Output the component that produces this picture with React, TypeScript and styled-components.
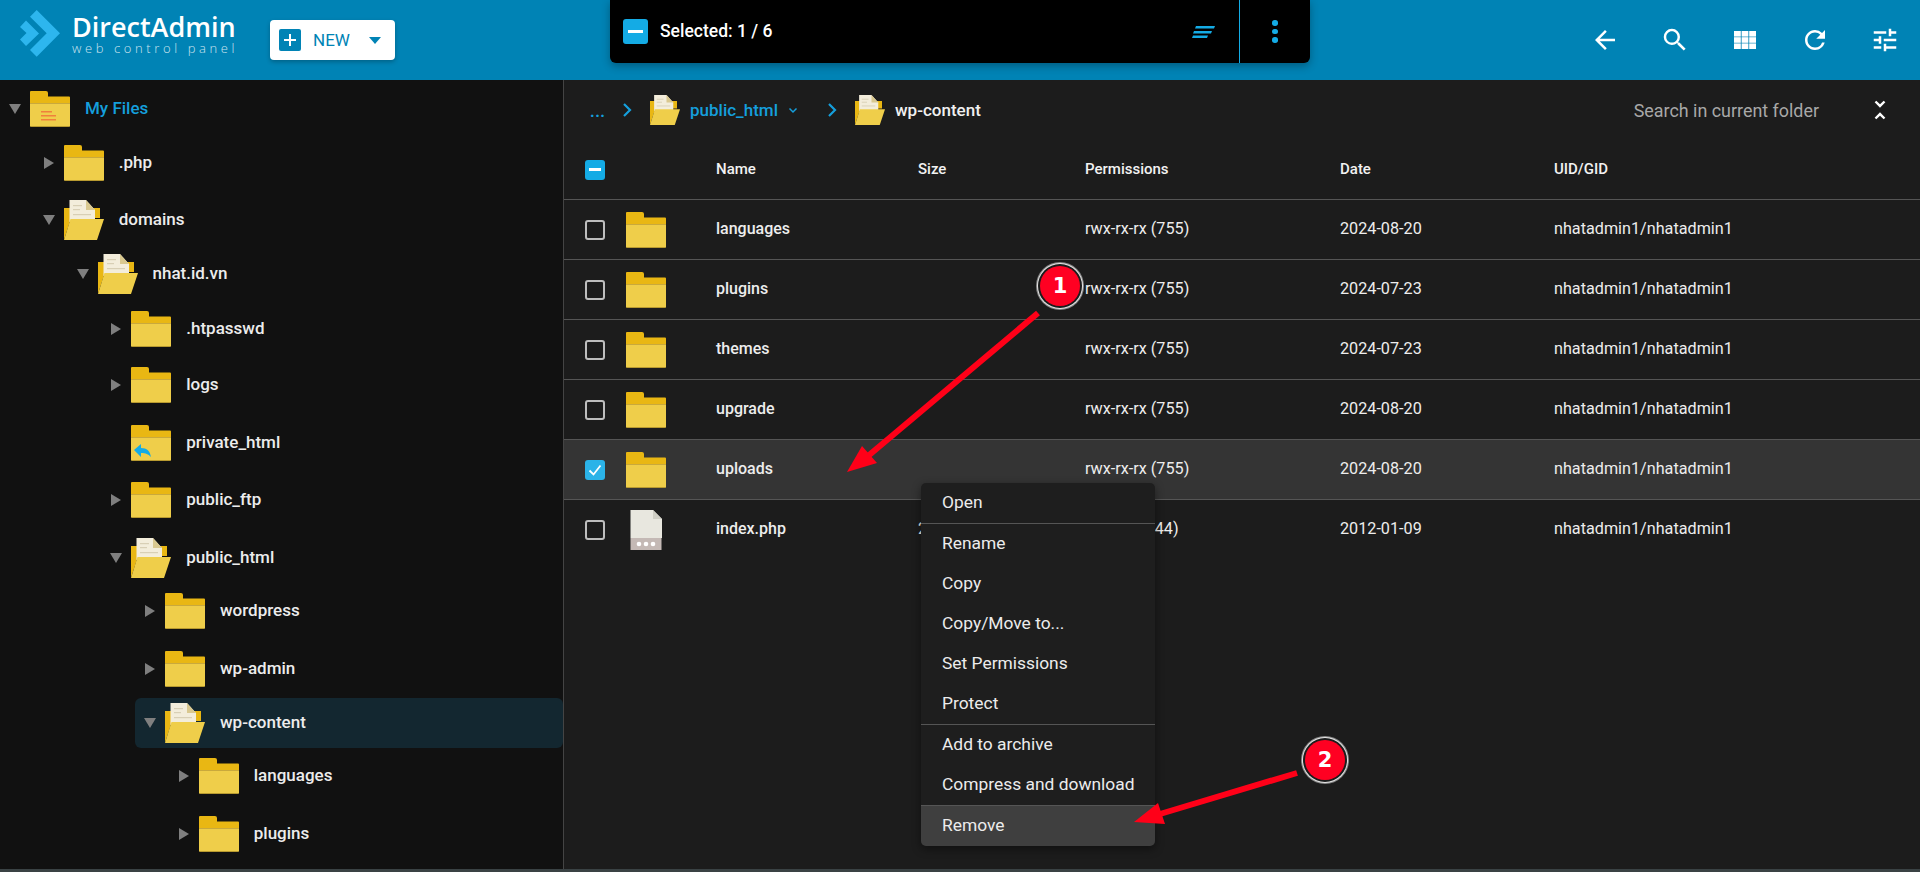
import styled, { createGlobalStyle } from "styled-components";
import { MdArrowBack, MdSearch, MdRefresh, MdTune, MdUnfoldLess } from "react-icons/md";

const GlobalStyle = createGlobalStyle`
  html, body {
    margin: 0;
    padding: 0;
    height: 100%;
    overflow: hidden;
    background: #111;
  }
  * {
    box-sizing: border-box;
  }
  body {
    font-family: Roboto, "Liberation Sans", sans-serif;
  }
`;

const Page = styled.div`
  position: relative;
  display: grid;
  grid-template-rows: 80px 789px 3px;
  width: 1920px;
  height: 872px;
  overflow: hidden;
`;

const Header = styled.header`
  position: relative;
  display: flex;
  align-items: center;
  background: #0083b5;
  padding-left: 20px;
`;

const LogoMark = styled.svg`
  flex: none;
  width: 40px;
  height: 47px;
  margin-top: -13px;
`;

const LogoText = styled.div`
  display: flex;
  flex-direction: column;
  margin-left: 12px;
  width: 170px;
  margin-top: -13px;
`;

const LogoName = styled.span`
  font-family: "Open Sans", sans-serif;
  font-size: 27px;
  font-weight: 600;
  line-height: 28px;
  color: #fff;
`;

const LogoSub = styled.span`
  font-family: "Open Sans", sans-serif;
  font-size: 13px;
  font-weight: 300;
  line-height: 14px;
  letter-spacing: 3.6px;
  white-space: nowrap;
  color: rgba(255, 255, 255, 0.8);
`;

const NewButton = styled.div`
  display: flex;
  align-items: center;
  width: 125px;
  height: 40px;
  margin-left: 28px;
  padding-left: 9px;
  background: #fff;
  border-radius: 4px;
  box-shadow: 0 2px 4px rgba(0, 0, 0, 0.25);
`;

const NewPlus = styled.span`
  position: relative;
  width: 22px;
  height: 22px;
  border-radius: 2px;
  background: #0083b5;
  &::before,
  &::after {
    content: "";
    position: absolute;
    background: #fff;
  }
  &::before {
    left: 5px;
    right: 5px;
    top: 10px;
    height: 2px;
  }
  &::after {
    top: 5px;
    bottom: 5px;
    left: 10px;
    width: 2px;
  }
`;

const NewLabel = styled.span`
  margin-left: 12px;
  font-size: 17px;
  font-weight: 400;
  color: #0083b5;
`;

const NewCaret = styled.span`
  margin-left: 19px;
  border-left: 6.5px solid transparent;
  border-right: 6.5px solid transparent;
  border-top: 7px solid #0083b5;
`;

const SelectionBar = styled.div`
  position: absolute;
  left: 610px;
  top: 0;
  display: flex;
  align-items: center;
  width: 700px;
  height: 63px;
  padding-left: 13px;
  background: #000;
  border-radius: 0 0 6px 6px;
  box-shadow: 0 3px 8px rgba(0, 0, 0, 0.3);
  z-index: 2;
`;

const SelectAll = styled.span<{ $size: number }>`
  flex: none;
  display: flex;
  align-items: center;
  justify-content: center;
  width: ${({ $size }) => $size}px;
  height: ${({ $size }) => $size}px;
  background: #14abe5;
  border-radius: 3px;
  &::before {
    content: "";
    width: 60%;
    height: 3px;
    background: #fff;
  }
`;

const SelectedText = styled.span`
  margin-left: 12px;
  margin-bottom: 2px;
  font-size: 17.5px;
  font-weight: 500;
  color: #fff;
`;

const StackIcon = styled.svg`
  width: 23px;
  height: 12px;
  margin-left: auto;
  margin-right: 24px;
`;

const BarAction = styled.div`
  display: flex;
  flex-direction: column;
  align-items: center;
  justify-content: center;
  gap: 3px;
  width: 71px;
  height: 100%;
  border-left: 1px solid #14abe5;
`;

const BarDot = styled.span`
  width: 5.5px;
  height: 5.5px;
  border-radius: 50%;
  background: #14abe5;
`;

const HeaderActions = styled.nav`
  display: flex;
  margin-left: auto;
`;

const HeaderAction = styled.div`
  display: flex;
  align-items: center;
  justify-content: center;
  width: 70px;
  height: 80px;
  color: #fff;
  font-size: 30px;
`;

const Content = styled.div`
  display: grid;
  grid-template-columns: 564px 1fr;
  min-height: 0;
`;

const Sidebar = styled.aside`
  background: #111;
  border-right: 1px solid #444;
  padding-top: 4px;
  overflow: hidden;
`;

const TreeRow = styled.div<{ $depth: number; $gap: number; $active?: boolean }>`
  display: flex;
  align-items: center;
  height: 50px;
  margin-top: ${({ $gap }) => $gap}px;
  margin-left: ${({ $depth }) => $depth * 33.75}px;
  border-radius: 6px;
  background: ${({ $active }) => ($active ? "#132730" : "transparent")};
`;

const TreeCaretCell = styled.span`
  flex: none;
  display: flex;
  align-items: center;
  justify-content: center;
  width: 30px;
`;

const TreeCaret = styled.span<{ $open: boolean }>`
  width: 0;
  height: 0;
  ${({ $open }) =>
    $open
      ? `border-left: 6px solid transparent;
         border-right: 6px solid transparent;
         border-top: 10px solid #7f7f7f;`
      : `border-top: 6px solid transparent;
         border-bottom: 6px solid transparent;
         border-left: 10px solid #7f7f7f;`}
`;

const TreeLabel = styled.span<{ $root?: boolean }>`
  margin-left: 15px;
  margin-bottom: 2px;
  font-size: 17px;
  font-weight: 500;
  color: ${({ $root }) => ($root ? "#159fdc" : "#ececec")};
`;

const Main = styled.main`
  position: relative;
  background: #1c1c1c;
`;

const Crumbs = styled.div`
  display: flex;
  align-items: center;
  height: 60px;
  padding: 0 26px 0 26px;
`;

const CrumbDots = styled.span`
  width: 12px;
  margin-top: 2px;
  font-size: 16px;
  font-weight: 700;
  color: #159fdc;
  letter-spacing: 0.5px;
`;

const CrumbChevron = styled.svg<{ $first?: boolean }>`
  width: 10px;
  height: 14px;
  margin: 0 18px 0 ${({ $first }) => ($first ? 20 : 29)}px;
`;

const CrumbLabel = styled.span<{ $link?: boolean }>`
  margin-left: 10px;
  font-size: 17px;
  font-weight: 500;
  color: ${({ $link }) => ($link ? "#159fdc" : "#f0f0f0")};
`;

const CrumbCaret = styled.svg`
  width: 10px;
  height: 7px;
  margin-left: 10px;
`;

const SearchLabel = styled.span`
  margin-left: auto;
  font-size: 17.9px;
  color: #a8a8a8;
`;

const Collapse = styled.div`
  display: flex;
  margin-left: 47px;
  color: #fff;
  font-size: 28px;
`;

const GridRow = styled.div<{ $selected?: boolean; $head?: boolean }>`
  display: grid;
  grid-template-columns: 41px 90px 202px 167px 255px 214px 1fr;
  align-items: center;
  height: ${({ $head }) => ($head ? 59 : 60)}px;
  padding-left: 21px;
  border-top: ${({ $head }) => ($head ? "none" : "1px solid #555")};
  background: ${({ $selected }) => ($selected ? "#343434" : "transparent")};
  color: #ededed;
  font-size: 16.2px;
`;

const Cell = styled.span`
  margin-bottom: 2px;
`;

const HeadCell = styled(Cell)`
  font-size: 15px;
  font-weight: 500;
  color: #f2f2f2;
`;

const NameCell = styled(Cell)`
  font-weight: 500;
  font-size: 16px;
`;

const Check = styled.span`
  width: 20px;
  height: 20px;
  border: 2px solid #bdbdbd;
  border-radius: 3px;
`;

const CheckOn = styled.span`
  display: flex;
  align-items: center;
  justify-content: center;
  width: 20px;
  height: 20px;
  background: #2bb3e8;
  border-radius: 3px;
`;

const ContextMenu = styled.div`
  position: absolute;
  left: 357px;
  top: 403px;
  width: 234px;
  background: #1e1e1e;
  border-radius: 5px;
  box-shadow: 0 3px 10px rgba(0, 0, 0, 0.45);
  overflow: hidden;
  z-index: 3;
`;

const MenuItem = styled.div<{ $hover?: boolean; $rule?: boolean }>`
  display: flex;
  align-items: center;
  height: ${({ $rule }) => ($rule ? 41 : 40)}px;
  padding: 0 0 2px 21px;
  border-top: ${({ $rule }) => ($rule ? "1px solid #555" : "none")};
  background: ${({ $hover }) => ($hover ? "#3f3f3f" : "transparent")};
  font-size: 17.4px;
  color: #ececec;
`;

const Footer = styled.div`
  background: #3a4244;
`;

const Annotations = styled.svg`
  position: absolute;
  left: 0;
  top: 0;
  width: 1920px;
  height: 872px;
  pointer-events: none;
  z-index: 5;
`;

const Badge = styled.div<{ $x: number; $y: number }>`
  position: absolute;
  left: ${({ $x }) => $x - 20}px;
  top: ${({ $y }) => $y - 20}px;
  display: flex;
  align-items: center;
  justify-content: center;
  width: 40px;
  height: 40px;
  border-radius: 50%;
  background: #ff0022;
  box-shadow: 0 0 0 2px #1c1c1c, 0 0 0 3px #e5e5e5, 0 0 0 4px #888;
  font-family: "DejaVu Sans", sans-serif;
  font-size: 21px;
  font-weight: 700;
  color: #fff;
  z-index: 6;
`;

const FolderIcon = ({ mark }: { mark?: "lines" | "link" }) => (
  <svg width="40" height="36" viewBox="0 0 40 36" style={{ flex: "none" }}>
    <path d="M1 0h15a2 2 0 0 1 2 2v3.5h21a1 1 0 0 1 1 1V34a1 1 0 0 1-1 1H1a1 1 0 0 1-1-1V1a1 1 0 0 1 1-1z" fill="#e9b713" />
    <path d="M0 12h40v22.5a1.5 1.5 0 0 1-1.5 1.5H1.5A1.5 1.5 0 0 1 0 34.500z" fill="#efce4a" />
    <rect x="0" y="12" width="40" height="1" fill="#c9a93c" />
    <rect x="1" y="35" width="38" height="1" fill="#b89a30" />
    {mark === "lines" && (
      <g fill="#f0803c">
        <rect x="11" y="20" width="11" height="1.500" />
        <rect x="11" y="24" width="15" height="1.500" />
        <rect x="11" y="28" width="15" height="1.500" />
      </g>
    )}
    {mark === "link" && (
      <path d="M3 25l7-6v4c6 0 9 3 10 9-3-3-5-4-10-4v4z" fill="#14abe5" />
    )}
  </svg>
);

const OpenFolderIcon = ({ size = 40 }: { size?: number }) => (
  <svg width={size} height={size} viewBox="0 0 40 40" style={{ flex: "none" }}>
    <path d="M0 8h36v10H7L0 40z" fill="#e9b713" />
    <path d="M5.500 0H22l9 10v12H5.500z" fill="#f3eddb" />
    <path d="M22 0l9 10h-9z" fill="#d9c88f" />
    <g fill="#d8cfb5">
      <rect x="9" y="5" width="9" height="1.200" />
      <rect x="9" y="9" width="7" height="1.200" />
      <rect x="9" y="14" width="18" height="1.200" />
    </g>
    <path d="M6.500 19H40l-7 21H0z" fill="#efce4a" />
  </svg>
);

const FileIcon = () => (
  <svg width="40" height="40" viewBox="0 0 40 40">
    <path d="M4.500 0H27l9 9v19H4.500z" fill="#e8e7df" />
    <path d="M27 0l9 9h-9z" fill="#cfcec4" />
    <rect x="4.500" y="28" width="31" height="12" fill="#c4b9b5" />
    <g fill="#fff">
      <circle cx="13" cy="34" r="2.300" />
      <circle cx="20" cy="34" r="2.300" />
      <circle cx="27" cy="34" r="2.300" />
    </g>
  </svg>
);

const GridIcon = () => (
  <svg width="22" height="18" viewBox="0 0 22 18" fill="#fff">
    {[0, 1, 2].map((c) =>
      [0, 1, 2].map((r) => (
        <rect key={`${c}-${r}`} x={c * 7.600} y={r * 6.200} width="6.800" height="5.600" />
      ))
    )}
  </svg>
);

const Chevron = ({ first }: { first?: boolean }) => (
  <CrumbChevron $first={first} viewBox="0 0 10 14">
    <path d="M2 1l6 6-6 6" fill="none" stroke="#159fdc" strokeWidth="2.200" />
  </CrumbChevron>
);

type TreeItem = {
  name: string;
  depth: number;
  gap: number;
  caret?: "open" | "closed";
  open?: boolean;
  mark?: "lines" | "link";
  root?: boolean;
  active?: boolean;
};

const tree: TreeItem[] = [
  { name: "My Files", depth: 0, gap: 0, caret: "open", mark: "lines", root: true },
  { name: ".php", depth: 1, gap: 4, caret: "closed" },
  { name: "domains", depth: 1, gap: 7, caret: "open", open: true },
  { name: "nhat.id.vn", depth: 2, gap: 4, caret: "open", open: true },
  { name: ".htpasswd", depth: 3, gap: 5, caret: "closed" },
  { name: "logs", depth: 3, gap: 6, caret: "closed" },
  { name: "private_html", depth: 3, gap: 8, mark: "link" },
  { name: "public_ftp", depth: 3, gap: 7, caret: "closed" },
  { name: "public_html", depth: 3, gap: 8, caret: "open", open: true },
  { name: "wordpress", depth: 4, gap: 3, caret: "closed" },
  { name: "wp-admin", depth: 4, gap: 8, caret: "closed" },
  { name: "wp-content", depth: 4, gap: 4, caret: "open", open: true, active: true },
  { name: "languages", depth: 5, gap: 3, caret: "closed" },
  { name: "plugins", depth: 5, gap: 8, caret: "closed" },
];

const files = [
  { name: "languages", date: "2024-08-20" },
  { name: "plugins", date: "2024-07-23" },
  { name: "themes", date: "2024-07-23" },
  { name: "upgrade", date: "2024-08-20" },
  { name: "uploads", date: "2024-08-20", selected: true },
];

const owner = "nhatadmin1/nhatadmin1";

const App = () => {
  return (
    <>
      <GlobalStyle />
      <Page>
        <Header>
          <LogoMark viewBox="0 0 40 47">
            <path d="M16.700 0L40 23.300 16.700 46.700 10 40l16.700-16.700L10 6.700z" fill="#2db6ee" />
            <path d="M6 10.500L19 23.500 6 36 0 29.500 6.500 23 0 17z" fill="#2db6ee" />
          </LogoMark>
          <LogoText>
            <LogoName>DirectAdmin</LogoName>
            <LogoSub>web control panel</LogoSub>
          </LogoText>
          <NewButton>
            <NewPlus />
            <NewLabel>NEW</NewLabel>
            <NewCaret />
          </NewButton>
          <SelectionBar>
            <SelectAll $size={25} />
            <SelectedText>Selected: 1 / 6</SelectedText>
            <StackIcon viewBox="0 0 23 12">
              <path d="M4 0h19l-1 2.500H3zM2 5h18l-1 2.500H1zM1 9.500h15L15 12H0z" fill="#14abe5" />
            </StackIcon>
            <BarAction>
              <BarDot />
              <BarDot />
              <BarDot />
            </BarAction>
          </SelectionBar>
          <HeaderActions>
            <HeaderAction><MdArrowBack /></HeaderAction>
            <HeaderAction><MdSearch /></HeaderAction>
            <HeaderAction><GridIcon /></HeaderAction>
            <HeaderAction><MdRefresh /></HeaderAction>
            <HeaderAction><MdTune /></HeaderAction>
          </HeaderActions>
        </Header>
        <Content>
          <Sidebar>
            {tree.map((item) => (
              <TreeRow key={item.name + item.depth} $depth={item.depth} $gap={item.gap} $active={item.active}>
                <TreeCaretCell>
                  {item.caret && <TreeCaret $open={item.caret === "open"} />}
                </TreeCaretCell>
                {item.open ? <OpenFolderIcon /> : <FolderIcon mark={item.mark} />}
                <TreeLabel $root={item.root}>{item.name}</TreeLabel>
              </TreeRow>
            ))}
          </Sidebar>
          <Main>
            <Crumbs>
              <CrumbDots>...</CrumbDots>
              <Chevron first />
              <OpenFolderIcon size={30} />
              <CrumbLabel $link>public_html</CrumbLabel>
              <CrumbCaret viewBox="0 0 10 7">
                <path d="M1.500 1.500L5 5l3.500-3.500" fill="none" stroke="#159fdc" strokeWidth="1.500" />
              </CrumbCaret>
              <Chevron />
              <OpenFolderIcon size={30} />
              <CrumbLabel>wp-content</CrumbLabel>
              <SearchLabel>Search in current folder</SearchLabel>
              <Collapse><MdUnfoldLess /></Collapse>
            </Crumbs>
            <GridRow $head>
              <SelectAll $size={20} />
              <span />
              <HeadCell>Name</HeadCell>
              <HeadCell>Size</HeadCell>
              <HeadCell>Permissions</HeadCell>
              <HeadCell>Date</HeadCell>
              <HeadCell>UID/GID</HeadCell>
            </GridRow>
            {files.map((file) => (
              <GridRow key={file.name} $selected={file.selected}>
                {file.selected ? (
                  <CheckOn>
                    <svg width="14" height="12" viewBox="0 0 14 12">
                      <path d="M1.500 6.500L5.500 10.500 12.500 1.500" fill="none" stroke="#fff" strokeWidth="1.800" />
                    </svg>
                  </CheckOn>
                ) : (
                  <Check />
                )}
                <FolderIcon />
                <NameCell>{file.name}</NameCell>
                <span />
                <Cell>rwx-rx-rx (755)</Cell>
                <Cell>{file.date}</Cell>
                <Cell>{owner}</Cell>
              </GridRow>
            ))}
            <GridRow>
              <Check />
              <FileIcon />
              <NameCell>index.php</NameCell>
              <Cell>28 B</Cell>
              <Cell>rw-r--r-- (644)</Cell>
              <Cell>2012-01-09</Cell>
              <Cell>{owner}</Cell>
            </GridRow>
            <ContextMenu>
              <MenuItem>Open</MenuItem>
              <MenuItem $rule>Rename</MenuItem>
              <MenuItem>Copy</MenuItem>
              <MenuItem>Copy/Move to...</MenuItem>
              <MenuItem>Set Permissions</MenuItem>
              <MenuItem>Protect</MenuItem>
              <MenuItem $rule>Add to archive</MenuItem>
              <MenuItem>Compress and download</MenuItem>
              <MenuItem $hover $rule>Remove</MenuItem>
            </ContextMenu>
          </Main>
        </Content>
        <Footer />
        <Annotations viewBox="0 0 1920 872">
          <path d="M1038 313L868 456" stroke="#ff0018" strokeWidth="6" />
          <path d="M847 472L862 446 877 463z" fill="#ff0018" />
          <path d="M1297 773L1160 814" stroke="#ff0018" strokeWidth="6" />
          <path d="M1134 822L1158 803 1165 824z" fill="#ff0018" />
        </Annotations>
        <Badge $x={1060} $y={286}>1</Badge>
        <Badge $x={1325} $y={760}>2</Badge>
      </Page>
    </>
  );
};

export default App;
